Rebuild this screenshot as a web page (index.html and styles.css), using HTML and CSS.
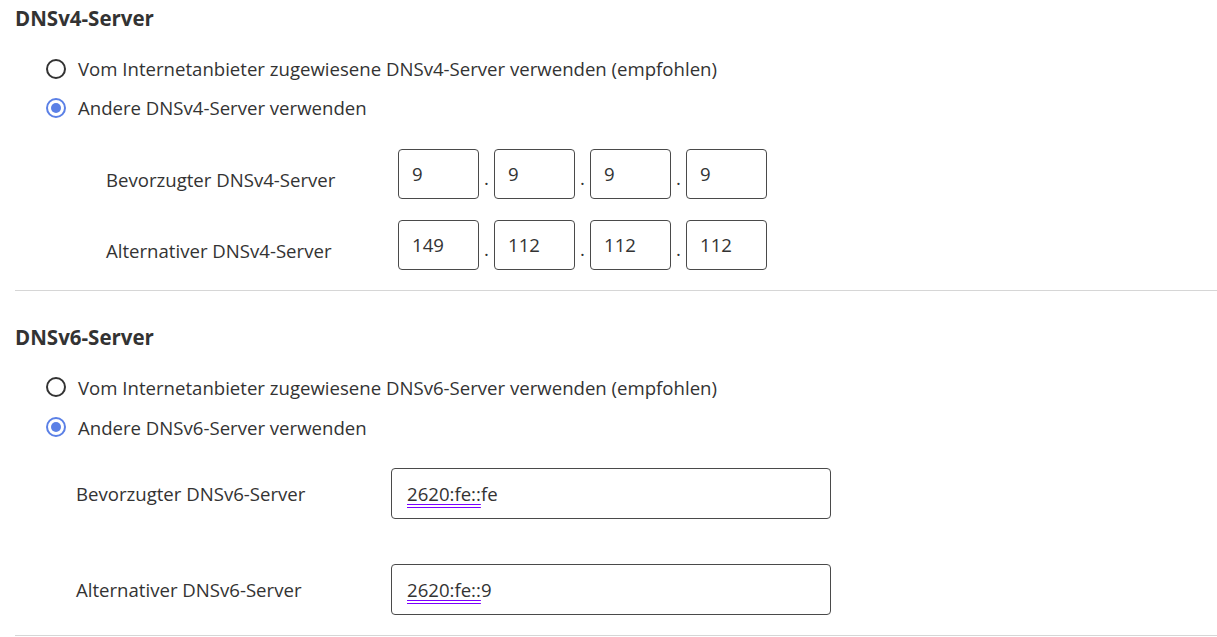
FILE: index.html
```html
<!DOCTYPE html>
<html lang="de">
<head>
<meta charset="utf-8">
<title>DNS-Server</title>
<link rel="stylesheet" href="styles.css">
</head>
<body>
<div class="page">
  <section class="block block-v4">
    <h2 class="title">DNSv4-Server</h2>
    <div class="radios">
      <label class="radio"><span class="knob"></span><span class="radio-text">Vom Internetanbieter zugewiesene DNSv4-Server verwenden (empfohlen)</span></label>
      <label class="radio checked"><span class="knob"></span><span class="radio-text">Andere DNSv4-Server verwenden</span></label>
    </div>
    <div class="rows4">
      <div class="row4">
        <span class="lbl">Bevorzugter DNSv4-Server</span>
        <div class="octets">
          <span class="box">9</span><span class="sep">.</span>
          <span class="box">9</span><span class="sep">.</span>
          <span class="box">9</span><span class="sep">.</span>
          <span class="box">9</span>
        </div>
      </div>
      <div class="row4">
        <span class="lbl">Alternativer DNSv4-Server</span>
        <div class="octets">
          <span class="box">149</span><span class="sep">.</span>
          <span class="box">112</span><span class="sep">.</span>
          <span class="box">112</span><span class="sep">.</span>
          <span class="box">112</span>
        </div>
      </div>
    </div>
  </section>
  <div class="divider"></div>
  <section class="block block-v6">
    <h2 class="title">DNSv6-Server</h2>
    <div class="radios radios-v6">
      <label class="radio"><span class="knob"></span><span class="radio-text">Vom Internetanbieter zugewiesene DNSv6-Server verwenden (empfohlen)</span></label>
      <label class="radio checked"><span class="knob"></span><span class="radio-text">Andere DNSv6-Server verwenden</span></label>
    </div>
    <div class="rows6">
      <div class="row6">
        <span class="lbl">Bevorzugter DNSv6-Server</span>
        <div class="field"><span class="mark">2620:fe::</span>fe</div>
      </div>
      <div class="row6">
        <span class="lbl">Alternativer DNSv6-Server</span>
        <div class="field"><span class="mark">2620:fe::</span>9</div>
      </div>
    </div>
  </section>
  <div class="divider divider-bottom"></div>
</div>
</body>
</html>
```

FILE: styles.css
```css
* { box-sizing: border-box; }
html, body { margin: 0; background: #fff; }
body {
  font-family: "Open Sans", "Noto Sans", sans-serif;
  font-size: 18.6px;
  color: #333;
}
.page { padding-left: 15px; }
.title {
  margin: 0;
  padding-top: 6px;
  font-size: 20.5px;
  line-height: 24px;
  font-weight: 700;
  color: #333;
}
.block-v6 .title { padding-top: 34px; }
.radios {
  margin-top: 19px;
  margin-left: 31px;
  display: flex;
  flex-direction: column;
}
.radio {
  height: 39px;
  display: flex;
  align-items: center;
  gap: 12px;
}
.radios-v6 { margin-top: 18px; }
.radios-v6 .radio { height: 40px; }
.knob {
  width: 20px;
  height: 20px;
  border: 2px solid #333;
  border-radius: 50%;
  display: flex;
  align-items: center;
  justify-content: center;
  flex: none;
}
.checked .knob { border-color: #5b80e6; }
.checked .knob::after {
  content: "";
  width: 10px;
  height: 10px;
  border-radius: 50%;
  background: #5b80e6;
}
.rows4 {
  margin-top: 22px;
  display: flex;
  flex-direction: column;
  gap: 21px;
}
.row4 {
  display: grid;
  grid-template-columns: 292px auto;
  align-items: center;
  padding-left: 91px;
  height: 50px;
}
.row4 .lbl { padding-top: 10px; }
.octets { display: flex; align-items: stretch; height: 50px; }
.box {
  width: 81px;
  border: 1px solid #4a4a4a;
  border-radius: 4px;
  padding-left: 13px;
  padding-bottom: 2px;
  display: flex;
  align-items: center;
}
.sep {
  width: 15px;
  display: flex;
  align-items: center;
  justify-content: center;
  padding-top: 6px;
}
.divider {
  margin-top: 20px;
  height: 1px;
  background: #d6d6d6;
}
.rows6 {
  margin-top: 21px;
  display: flex;
  flex-direction: column;
  gap: 45px;
}
.row6 {
  display: grid;
  grid-template-columns: 315px 440px;
  align-items: center;
  padding-left: 61px;
  height: 51px;
}
.field {
  height: 51px;
  border: 1px solid #4a4a4a;
  border-radius: 4px;
  padding-left: 15px;
  display: flex;
  align-items: center;
}
.mark {
  text-decoration-line: underline;
  text-decoration-style: double;
  text-decoration-color: #7a00ff;
  text-underline-offset: 3px;
}
```
